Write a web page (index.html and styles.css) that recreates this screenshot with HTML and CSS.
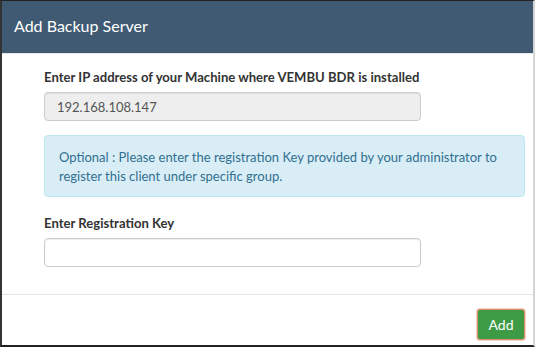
FILE: index.html
```html
<!DOCTYPE html>
<html>
<head>
<meta charset="utf-8">
<link rel="stylesheet" href="styles.css">
</head>
<body>
<div class="modal">
  <div class="modal-header">
    <h4 class="modal-title">Add Backup Server</h4>
  </div>
  <div class="modal-body">
    <label class="field-label">Enter IP address of your Machine where VEMBU BDR is installed</label>
    <input class="field-input readonly" type="text" value="192.168.108.147" readonly>
    <div class="alert-info">Optional : Please enter the registration Key provided by your administrator to register this client under specific group.</div>
    <label class="field-label">Enter Registration Key</label>
    <input class="field-input" type="text">
  </div>
  <div class="modal-footer">
    <button class="btn-add" type="button">Add</button>
  </div>
</div>
</body>
</html>
```

FILE: styles.css
```css
html, body {
  margin: 0;
  padding: 0;
  background: #fff;
}
.modal {
  box-sizing: border-box;
  width: 535px;
  height: 347px;
  border-top: 1px solid #222;
  border-left: 2px solid #333;
  border-bottom: 2px solid #222;
  border-right: 2px solid #d5d5d5;
  font-family: Lato, "Open Sans", sans-serif;
  color: #333;
  display: flex;
  flex-direction: column;
}
.modal-header {
  background: #3f5a72;
  height: 52px;
  border-bottom: 1px solid #e5e5e5;
  display: flex;
  align-items: center;
  padding-left: 12px;
}
.modal-title {
  margin: 0;
  color: #fff;
  font-size: 16px;
  font-weight: 400;
  position: relative;
  top: -2px;
}
.modal-body {
  padding: 14px 10px 0 42px;
  height: 241px;
  box-sizing: border-box;
  border-bottom: 1px solid #e5e5e5;
}
.field-label {
  display: block;
  font-size: 13.1px;
  font-weight: 700;
  line-height: 18px;
  margin-bottom: 6px;
}
.field-input {
  display: block;
  box-sizing: border-box;
  width: 377px;
  height: 29px;
  border: 1px solid #ccc;
  border-radius: 4px;
  padding: 0 12px;
  font-family: Lato, "Open Sans", sans-serif;
  font-size: 13px;
  color: #555;
  background: #fff;
  box-shadow: inset 0 1px 1px rgba(0,0,0,0.075);
}
.field-input.readonly {
  background: #eee;
}
.alert-info {
  box-sizing: border-box;
  width: 481px;
  margin: 14px 0 17px;
  padding: 12px 14px 10px;
  background: #d9edf7;
  border: 1px solid #bce8f1;
  border-radius: 4px;
  color: #31708f;
  font-size: 13px;
  line-height: 19px;
}
.modal-footer {
  flex: 1;
  display: flex;
  justify-content: flex-end;
  align-items: flex-start;
  padding: 14px 8px 0 0;
}
.btn-add {
  width: 48px;
  height: 31px;
  background: #3d9b45;
  color: #fff;
  border: 1px solid #e08a6b;
  border-radius: 3px;
  font-family: Lato, "Open Sans", sans-serif;
  font-size: 14px;
  padding: 0;
  box-shadow: 0 0 0 1px rgba(230,140,100,0.4);
}
```
